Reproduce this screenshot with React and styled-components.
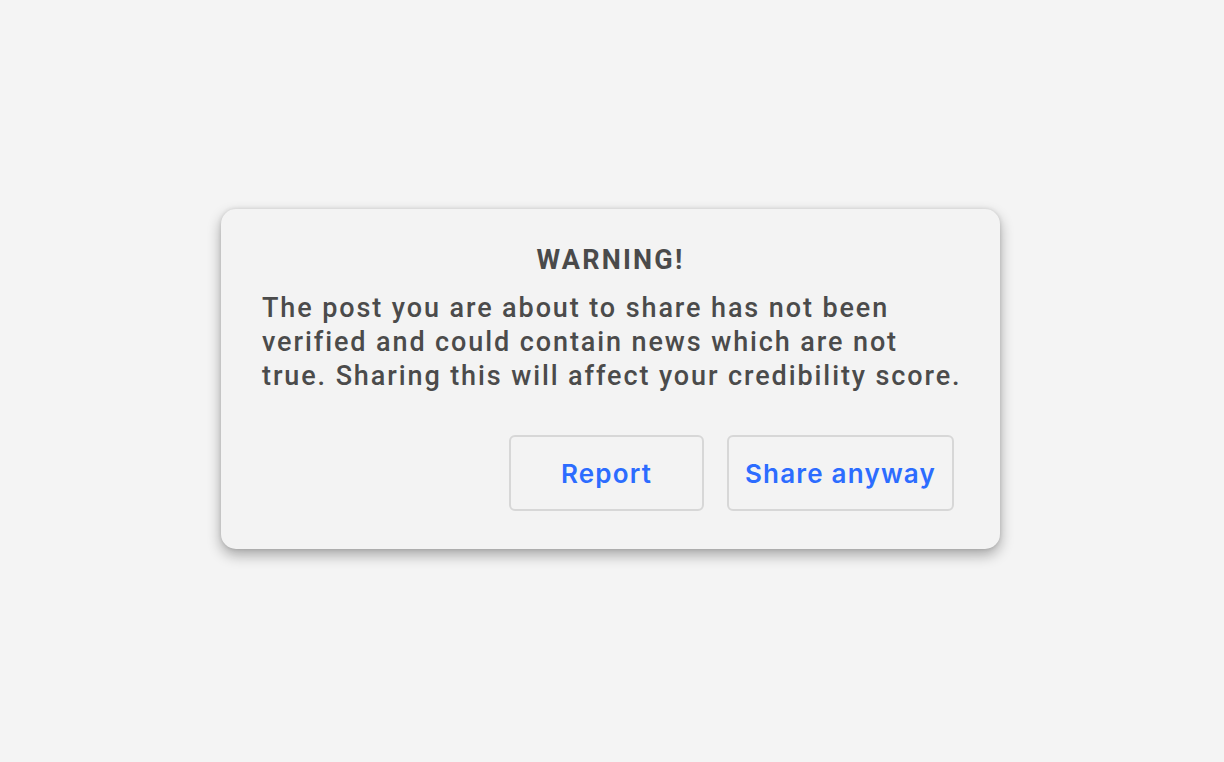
import React from "react";
import styled, { createGlobalStyle } from "styled-components";

const Global = createGlobalStyle`
  html, body { margin: 0; padding: 0; }
  body {
    background: #f4f4f4;
    font-family: Roboto, "Liberation Sans", sans-serif;
  }
`;

const Page = styled.div`
  height: 762px;
  display: flex;
  align-items: flex-start;
  justify-content: flex-start;
  padding: 209px 0 0 221px;
  box-sizing: border-box;
`;

const Dialog = styled.div`
  width: 779px;
  height: 340px;
  box-sizing: border-box;
  background: #f3f3f3;
  border-radius: 15px;
  box-shadow: 0 6px 14px rgba(0, 0, 0, 0.32), 0 0 4px rgba(0, 0, 0, 0.12);
  padding: 32px 30px 38px 41px;
  display: flex;
  flex-direction: column;
`;

const Title = styled.h2`
  margin: 0;
  padding-right: 11px;
  text-align: center;
  font-size: 27px;
  font-weight: 700;
  letter-spacing: 2.2px;
  color: #4a4a4a;
  line-height: 38px;
`;

const Body = styled.p`
  margin: 12px 0 0 0;
  font-size: 27px;
  font-weight: 500;
  letter-spacing: 1.9px;
  line-height: 34px;
  color: #4b4b4b;
  white-space: nowrap;
`;

const Actions = styled.div`
  margin-top: auto;
  display: flex;
  justify-content: flex-end;
  gap: 23px;
  padding-right: 16px;
`;

const Button = styled.button`
  width: ${(p) => p.$w}px;
  height: 76px;
  box-sizing: border-box;
  background: transparent;
  border: 2px solid #d7d7d7;
  border-radius: 6px;
  font-family: Inter, Roboto, "Liberation Sans", sans-serif;
  font-size: 26px;
  font-weight: 600;
  letter-spacing: 1.2px;
  color: #2c6cff;
  cursor: pointer;
  padding: 0;
`;

export default function App() {
  return (
    <>
      <Global />
      <Page>
        <Dialog>
          <Title>WARNING!</Title>
          <Body>
            The post you are about to share has not been
            <br />
            verified and could contain news which are not
            <br />
            true. Sharing this will affect your credibility score.
          </Body>
          <Actions>
            <Button $w={195}>Report</Button>
            <Button $w={227}>Share anyway</Button>
          </Actions>
        </Dialog>
      </Page>
    </>
  );
}
